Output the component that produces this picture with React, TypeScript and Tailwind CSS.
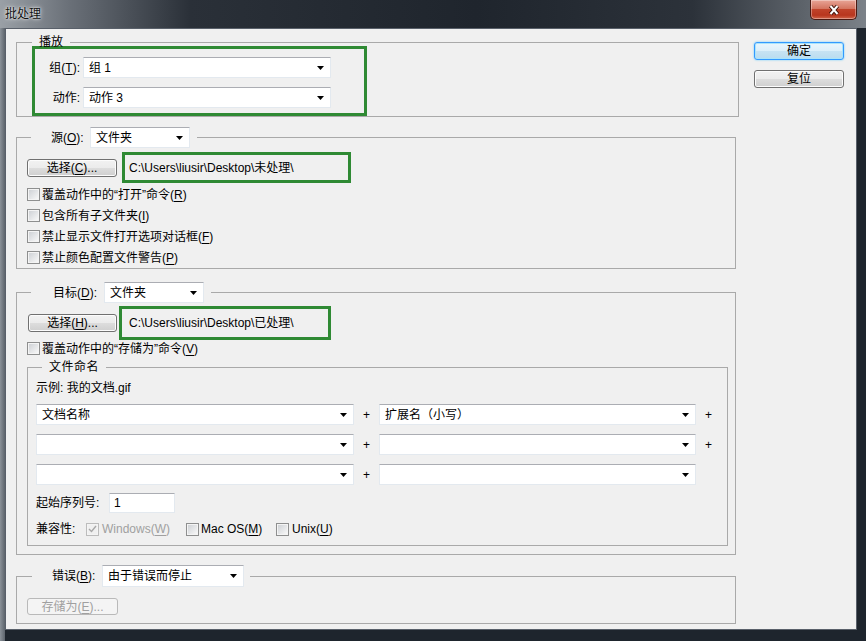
import React from "react";

const U = ({ children }: { children: React.ReactNode }) => (
  <span className="underline underline-offset-[2px]">{children}</span>
);

function Arrow() {
  return (
    <svg width="7" height="4" viewBox="0 0 7 4" className="shrink-0">
      <polygon points="0,0 7,0 3.5,4" fill="#000" />
    </svg>
  );
}

function Combo({ className, value }: { className: string; value?: string }) {
  return (
    <div
      className={`flex shrink-0 items-center justify-between border border-[#e3e9ef] border-t-[#abadb3] bg-white pl-[5px] pr-[6px] ${className}`}
    >
      <span>{value}</span>
      <Arrow />
    </div>
  );
}

function Check({ checked, disabled }: { checked?: boolean; disabled?: boolean }) {
  return (
    <span
      className={`flex h-[13px] w-[13px] shrink-0 border p-[1px] ${
        disabled ? "border-[#bcbcbc] bg-[#f4f4f4]" : "border-[#8e8f8f] bg-[#f4f4f4]"
      }`}
    >
      <span
        className={`flex h-full w-full items-center justify-center ${
          disabled ? "bg-[#f0f0f0]" : "bg-[linear-gradient(135deg,#cfd2d6,#f7f7f7)]"
        }`}
      >
        {checked && (
          <svg width="9" height="8" viewBox="0 0 9 8">
            <path d="M1 4 L3.5 6.5 L8 1" fill="none" stroke="#a8a8a8" strokeWidth="1.4" />
          </svg>
        )}
      </span>
    </span>
  );
}

function Btn({
  children,
  className,
  primary,
  disabled,
}: {
  children: React.ReactNode;
  className: string;
  primary?: boolean;
  disabled?: boolean;
}) {
  let look =
    "border-[#707070] bg-[linear-gradient(#f2f2f2_0%,#ebebeb_50%,#dddddd_50%,#cfcfcf_100%)] shadow-[inset_0_0_0_1px_#fcfcfc]";
  if (primary)
    look =
      "border-[#3399ff] bg-[linear-gradient(#eaf6fd_0%,#dceff9_50%,#c7e3f3_50%,#b9dcf0_100%)] shadow-[inset_0_0_0_1px_#a9e4fb,0_0_2px_#5cc8ff]";
  if (disabled) look = "border-[#b9b9b9] bg-[#f4f4f4] text-[#a0a0a0]";
  return (
    <div className={`flex shrink-0 items-center justify-center rounded-[3px] border ${look} ${className}`}>
      {children}
    </div>
  );
}

const PATH_BOX = "flex items-center border-[3px] border-[#2f8a34]";

export default function App() {
  return (
    <div className="flex h-[641px] w-[866px] flex-col overflow-hidden bg-[linear-gradient(90deg,#8a9198_0px,#5d646c_5px,#1e252d_5px)] font-['Liberation_Sans','Noto_Sans_CJK_SC',sans-serif] text-[12px] leading-[14px] text-black">
      {/* Title bar */}
      <div className="flex h-[28px] shrink-0 items-start justify-between bg-[linear-gradient(90deg,#9aa0a6_0%,#6a7078_8%,#2a3038_22%,#1f252d_55%,#2c323a_80%,#5e646b_93%,#7c8289_100%)]">
        <span className="ml-[5px] mt-[7px] text-[#111] [text-shadow:0_0_5px_rgba(255,255,255,0.9),0_0_2px_rgba(255,255,255,0.9)]">
          批处理
        </span>
        <div className="mr-[9px] flex h-[20px] w-[47px] items-center justify-center rounded-b-[5px] border border-t-0 border-[#4a1a12] bg-[linear-gradient(#e8a597_0%,#d47560_45%,#c0432a_50%,#b8361e_80%,#d0664a_100%)] shadow-[inset_0_0_0_1px_rgba(255,255,255,0.35)]">
          <svg width="14" height="12" viewBox="0 0 14 12">
            <path d="M3.5 2 L10.5 10 M10.5 2 L3.5 10" stroke="#3a1008" strokeWidth="4" />
            <path d="M3.5 2 L10.5 10 M10.5 2 L3.5 10" stroke="#fff" strokeWidth="2" />
          </svg>
        </div>
      </div>

      {/* Client area */}
      <div className="mb-[11px] ml-[5px] mr-[9px] flex flex-1 border border-[#59606a] bg-[#f0f0f0]">
        <div className="ml-[10px] flex w-[723px] flex-col">
          {/* 播放 */}
          <fieldset className="mt-[6px] w-[723px] border border-[#a9a9a9]">
            <legend className="ml-[15px] px-[7px]">播放</legend>
            <div className="-mt-[3px] ml-[15px] h-[70px] w-[335px] border-[3px] border-[#2f8a34] pt-[8px]">
              <div className="flex flex-col gap-[9px]">
                <div className="flex items-center">
                  <span className="w-[48px] pr-[3px] text-right">
                    组(<U>T</U>):
                  </span>
                  <Combo className="h-[21px] w-[248px]" value="组 1" />
                </div>
                <div className="flex items-center">
                  <span className="w-[48px] pr-[3px] text-right">动作:</span>
                  <Combo className="h-[21px] w-[248px]" value="动作 3" />
                </div>
              </div>
            </div>
          </fieldset>

          {/* 源 */}
          <fieldset className="mt-[10px] w-[720px] border border-[#a9a9a9]">
            <legend className="ml-[14px] pl-[20px] pr-[7px]">
              <div className="flex items-center">
                <span className="w-[39px]">
                  源(<U>O</U>):
                </span>
                <Combo className="h-[21px] w-[100px]" value="文件夹" />
              </div>
            </legend>
            <div className="mt-[4px] flex items-center">
              <Btn className="ml-[10px] h-[18px] w-[90px]">
                选择(<U>C</U>)...
              </Btn>
              <div className={`ml-[5px] h-[31px] w-[229px] pl-[4px] ${PATH_BOX}`}>
                {"C:\\Users\\liusir\\Desktop\\未处理\\"}
              </div>
            </div>
            <div className="mt-[1px] flex flex-col">
              <div className="flex h-[21px] items-center pl-[10px]">
                <Check />
                <span className="ml-[2px]">
                  覆盖动作中的“打开”命令(<U>R</U>)
                </span>
              </div>
              <div className="flex h-[21px] items-center pl-[10px]">
                <Check />
                <span className="ml-[2px]">
                  包含所有子文件夹(<U>I</U>)
                </span>
              </div>
              <div className="flex h-[21px] items-center pl-[10px]">
                <Check />
                <span className="ml-[2px]">
                  禁止显示文件打开选项对话框(<U>F</U>)
                </span>
              </div>
              <div className="flex h-[21px] items-center pl-[10px]">
                <Check />
                <span className="ml-[2px]">
                  禁止颜色配置文件警告(<U>P</U>)
                </span>
              </div>
            </div>
          </fieldset>

          {/* 目标 */}
          <fieldset className="mt-[13px] w-[720px] border border-[#a9a9a9]">
            <legend className="ml-[14px] pl-[22px] pr-[7px]">
              <div className="flex items-center">
                <span className="w-[51px]">
                  目标(<U>D</U>):
                </span>
                <Combo className="h-[21px] w-[100px]" value="文件夹" />
              </div>
            </legend>
            <div className="mt-[3px] flex items-center">
              <Btn className="ml-[11px] h-[18px] w-[89px]">
                选择(<U>H</U>)...
              </Btn>
              <div className={`ml-[2px] h-[34px] w-[212px] pl-[7px] ${PATH_BOX}`}>
                {"C:\\Users\\liusir\\Desktop\\已处理\\"}
              </div>
            </div>
            <div className="mt-[1px] flex h-[15px] items-center pl-[10px]">
              <Check />
              <span className="ml-[2px]">
                覆盖动作中的“存储为”命令(<U>V</U>)
              </span>
            </div>

            {/* 文件命名 */}
            <fieldset className="mb-[8px] ml-[10px] mt-[4px] w-[701px] border border-[#a9a9a9] pb-[8px]">
              <legend className="ml-[14px] px-[7px] tracking-[0.5px]">文件命名</legend>
              <div className="mt-[7px] pl-[8px]">示例: 我的文档.gif</div>
              <div className="mt-[9px] flex flex-col gap-[9px] pl-[8px]">
                <div className="flex h-[21px] items-center">
                  <Combo className="h-[21px] w-[318px]" value="文档名称" />
                  <span className="w-[25px] text-center">+</span>
                  <Combo className="h-[21px] w-[317px]" value="扩展名（小写）" />
                  <span className="w-[25px] text-center">+</span>
                </div>
                <div className="flex h-[21px] items-center">
                  <Combo className="h-[21px] w-[318px]" />
                  <span className="w-[25px] text-center">+</span>
                  <Combo className="h-[21px] w-[317px]" />
                  <span className="w-[25px] text-center">+</span>
                </div>
                <div className="flex h-[21px] items-center">
                  <Combo className="h-[21px] w-[318px]" />
                  <span className="w-[25px] text-center">+</span>
                  <Combo className="h-[21px] w-[317px]" />
                </div>
              </div>
              <div className="mt-[8px] flex items-center pl-[8px]">
                <span className="w-[73px]">起始序列号:</span>
                <div className="flex h-[20px] w-[66px] items-center border border-[#e3e9ef] border-t-[#abadb3] bg-white pl-[4px]">
                  1
                </div>
              </div>
              <div className="mt-[8px] flex h-[16px] items-center pl-[8px]">
                <span className="w-[50px]">兼容性:</span>
                <div className="flex w-[100px] items-center">
                  <Check checked disabled />
                  <span className="ml-[3px] text-[#a0a0a0]">
                    Windows(<U>W</U>)
                  </span>
                </div>
                <div className="flex w-[90px] items-center">
                  <Check />
                  <span className="ml-[2px]">
                    Mac OS(<U>M</U>)
                  </span>
                </div>
                <div className="flex items-center">
                  <Check />
                  <span className="ml-[3px]">
                    Unix(<U>U</U>)
                  </span>
                </div>
              </div>
            </fieldset>
          </fieldset>

          {/* 错误 */}
          <fieldset className="mt-[10px] w-[720px] border border-[#a9a9a9] pb-[8px]">
            <legend className="ml-[15px] pl-[20px] pr-[6px]">
              <div className="flex items-center">
                <span className="w-[50px]">
                  错误(<U>B</U>):
                </span>
                <Combo className="h-[22px] w-[142px]" value="由于错误而停止" />
              </div>
            </legend>
            <Btn disabled className="ml-[10px] mt-[11px] h-[17px] w-[91px]">
              存储为(<U>E</U>)...
            </Btn>
          </fieldset>
        </div>

        {/* Buttons */}
        <div className="ml-[15px] mt-[13px] flex flex-col gap-[10px]">
          <Btn primary className="h-[18px] w-[90px]">
            确定
          </Btn>
          <Btn className="h-[18px] w-[90px]">复位</Btn>
        </div>
      </div>
    </div>
  );
}
